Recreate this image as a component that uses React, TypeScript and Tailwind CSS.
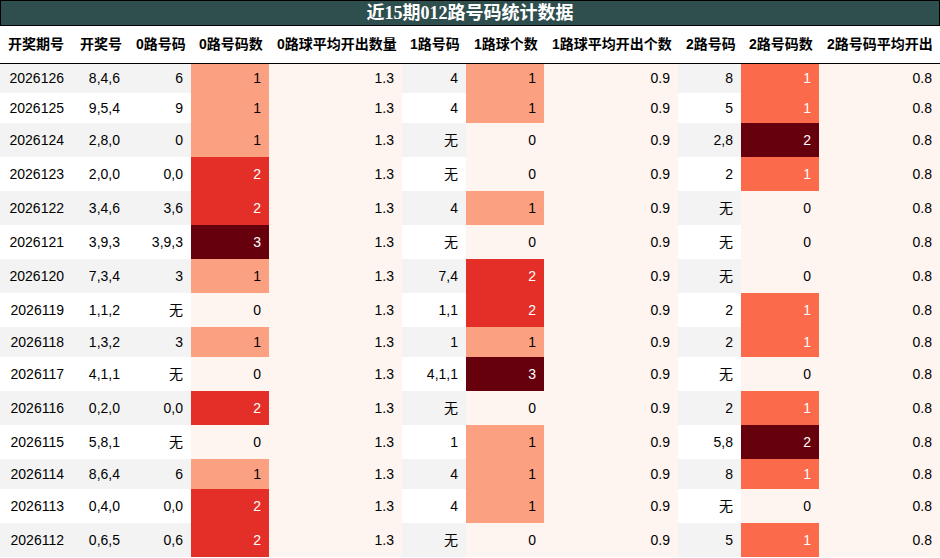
const rows: string[][] = [
  ['2026126', '8,4,6', '6', '1', '1.3', '4', '1', '0.9', '8', '1', '0.8'],
  ['2026125', '9,5,4', '9', '1', '1.3', '4', '1', '0.9', '5', '1', '0.8'],
  ['2026124', '2,8,0', '0', '1', '1.3', '无', '0', '0.9', '2,8', '2', '0.8'],
  ['2026123', '2,0,0', '0,0', '2', '1.3', '无', '0', '0.9', '2', '1', '0.8'],
  ['2026122', '3,4,6', '3,6', '2', '1.3', '4', '1', '0.9', '无', '0', '0.8'],
  ['2026121', '3,9,3', '3,9,3', '3', '1.3', '无', '0', '0.9', '无', '0', '0.8'],
  ['2026120', '7,3,4', '3', '1', '1.3', '7,4', '2', '0.9', '无', '0', '0.8'],
  ['2026119', '1,1,2', '无', '0', '1.3', '1,1', '2', '0.9', '2', '1', '0.8'],
  ['2026118', '1,3,2', '3', '1', '1.3', '1', '1', '0.9', '2', '1', '0.8'],
  ['2026117', '4,1,1', '无', '0', '1.3', '4,1,1', '3', '0.9', '无', '0', '0.8'],
  ['2026116', '0,2,0', '0,0', '2', '1.3', '无', '0', '0.9', '2', '1', '0.8'],
  ['2026115', '5,8,1', '无', '0', '1.3', '1', '1', '0.9', '5,8', '2', '0.8'],
  ['2026114', '8,6,4', '6', '1', '1.3', '4', '1', '0.9', '8', '1', '0.8'],
  ['2026113', '0,4,0', '0,0', '2', '1.3', '4', '1', '0.9', '无', '0', '0.8'],
  ['2026112', '0,6,5', '0,6', '2', '1.3', '无', '0', '0.9', '5', '1', '0.8'],
];

const headers = [
  '开奖期号', '开奖号', '0路号码', '0路号码数', '0路球平均开出数量',
  '1路号码', '1路球个数', '1路球平均开出个数', '2路号码', '2路号码数', '2路号码平均开出',
];

const widths = [72, 56, 63, 78, 133, 64, 78, 134, 63, 78, 121];

// count columns: 0-3 scale for 0路/1路, 0-2 scale for 2路
const scale3: Record<string, string> = {
  '0': 'bg-[#fff5f0] text-black',
  '1': 'bg-[#fca082] text-black',
  '2': 'bg-[#e32f27] text-white',
  '3': 'bg-[#67000d] text-white',
};
const scale2: Record<string, string> = {
  '0': 'bg-[#fff5f0] text-black',
  '1': 'bg-[#fb6a4a] text-white',
  '2': 'bg-[#67000d] text-white',
};

function cellClass(col: number, val: string, odd: boolean) {
  if (col === 3 || col === 6) return scale3[val];
  if (col === 9) return scale2[val];
  if (col === 4 || col === 7 || col === 10) return 'bg-[#fff5f0] text-black';
  return odd ? 'bg-[#f3f3f3] text-black' : 'bg-white text-black';
}

export default function App() {
  return (
    <div className="w-[940px] h-[558px] overflow-hidden bg-white font-['Liberation_Sans','Noto_Sans_CJK_SC',sans-serif]">
      <div className="h-[26px] border border-black bg-[#2f4f4f] flex items-center justify-center">
        <span className="text-white text-[18px] leading-[24px] font-bold font-['Liberation_Serif','Noto_Sans_CJK_SC',serif]">
          近15期012路号码统计数据
        </span>
      </div>
      <table className="table-fixed border-collapse w-[940px]">
        <colgroup>
          {widths.map((w, i) => (
            <col key={i} style={{ width: w }} />
          ))}
        </colgroup>
        <thead>
          <tr className="h-[37px] border-b border-black">
            {headers.map((h) => (
              <th key={h} className="px-2 text-right text-[14px] font-bold text-black whitespace-nowrap">
                {h}
              </th>
            ))}
          </tr>
        </thead>
        <tbody>
          {rows.map((r, ri) => {
            const tall = r.includes('无');
            return (
              <tr key={r[0]} className={tall ? 'h-[34px]' : 'h-[30px]'}>
                {r.map((v, ci) => (
                  <td
                    key={ci}
                    className={`px-2 py-0 text-right text-[14px] whitespace-nowrap ${cellClass(ci, v, ri % 2 === 0)}`}
                  >
                    {v}
                  </td>
                ))}
              </tr>
            );
          })}
        </tbody>
      </table>
    </div>
  );
}
